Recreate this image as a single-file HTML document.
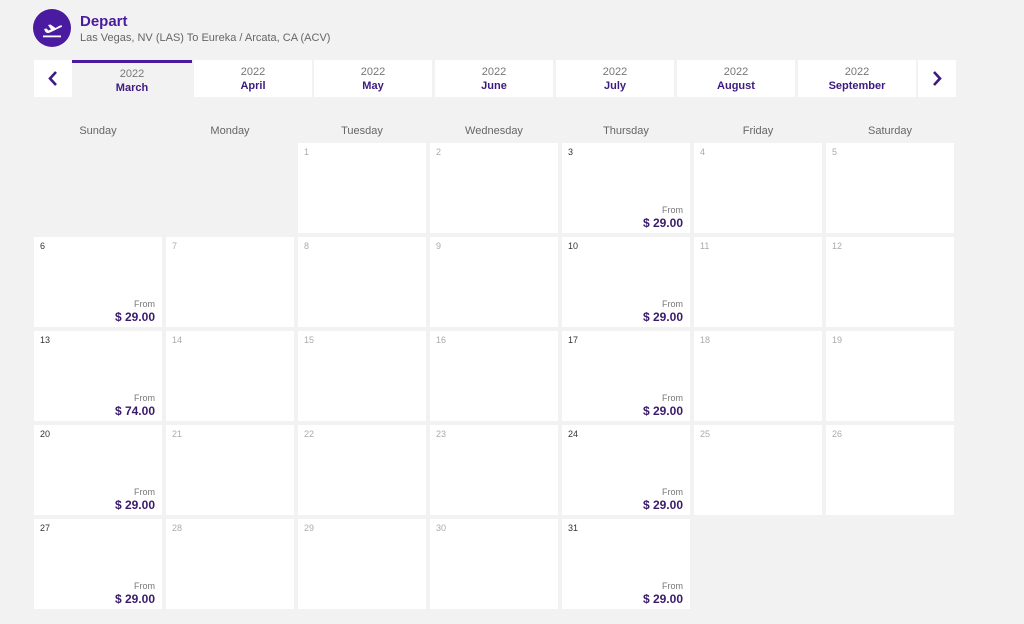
<!DOCTYPE html>
<html><head><meta charset="utf-8"><style>
*{margin:0;padding:0;box-sizing:border-box}
body{width:1024px;height:624px;background:#f2f2f2;font-family:"Liberation Sans","DejaVu Sans",sans-serif;position:relative;overflow:hidden}
.ic{position:absolute;left:33px;top:9px;width:38px;height:38px;border-radius:50%;background:#4a1aa0}
.t1{position:absolute;left:80px;top:13px;font-size:15px;font-weight:bold;color:#4a1aa0}
.t2{position:absolute;left:80px;top:32px;font-size:11px;color:#666}
.tab{position:absolute;top:60px;height:37px;background:#fff;text-align:center;font-size:11px;color:#777;padding-top:5px;line-height:14px}
.tab b{display:block;color:#3d1a80;font-size:11px}
.tab.sel{background:#f2f2f2;border-top:3px solid #4a1aa0;padding-top:4px}
.arr{position:absolute;top:60px;width:38px;height:37px;background:#fff}
.dh{position:absolute;top:125px;width:128px;text-align:center;font-size:11px;color:#666}
.g{position:absolute;left:34px;top:143px;display:grid;grid-template-columns:repeat(7,128px);grid-auto-rows:90px;column-gap:4px;row-gap:4px}
.c{background:#fff;position:relative}
.n{position:absolute;left:6px;top:4px;font-size:9px;color:#aaa}
.c.p .n{color:#333}
.f{position:absolute;right:7px;top:62px;font-size:9px;color:#777}
.pr{position:absolute;right:7px;top:73px;font-size:12px;font-weight:bold;color:#3a1a6a}
</style></head><body>
<div class="ic"><svg width="38" height="38" viewBox="0 0 38 38"><path d="M11 20 L13.5 19.5 L15.5 21.5 L18 20.5 L15 16 L17.5 15.5 L22.5 19 L26.5 16.8 C28.5 15.8 30 16.8 28.5 18 L17 23.5 C15 24.3 13.5 24 12.5 23 Z" fill="#fff"/><rect x="10" y="26.5" width="18" height="1.8" fill="#fff"/></svg></div>
<div class="t1">Depart</div>
<div class="t2">Las Vegas, NV (LAS) To Eureka / Arcata, CA (ACV)</div>
<div class="arr" style="left:34px"><svg width="38" height="37"><path d="M22 12 L16 18.5 L22 25" stroke="#3d1a80" stroke-width="2.6" fill="none"/></svg></div>
<div class="tab sel" style="left:72px;width:120px">2022<b>March</b></div>
<div class="tab" style="left:194px;width:118px">2022<b>April</b></div>
<div class="tab" style="left:314px;width:118px">2022<b>May</b></div>
<div class="tab" style="left:435px;width:118px">2022<b>June</b></div>
<div class="tab" style="left:556px;width:118px">2022<b>July</b></div>
<div class="tab" style="left:677px;width:118px">2022<b>August</b></div>
<div class="tab" style="left:798px;width:118px">2022<b>September</b></div>
<div class="arr" style="left:918px"><svg width="38" height="37"><path d="M16 12 L22 18.5 L16 25" stroke="#3d1a80" stroke-width="2.6" fill="none"/></svg></div>
<div class="dh" style="left:34px">Sunday</div>
<div class="dh" style="left:166px">Monday</div>
<div class="dh" style="left:298px">Tuesday</div>
<div class="dh" style="left:430px">Wednesday</div>
<div class="dh" style="left:562px">Thursday</div>
<div class="dh" style="left:694px">Friday</div>
<div class="dh" style="left:826px">Saturday</div>
<div class="g">
<div></div><div></div>
<div class="c"><span class="n">1</span></div>
<div class="c"><span class="n">2</span></div>
<div class="c p"><span class="n">3</span><span class="f">From</span><span class="pr">$ 29.00</span></div>
<div class="c"><span class="n">4</span></div>
<div class="c"><span class="n">5</span></div>
<div class="c p"><span class="n">6</span><span class="f">From</span><span class="pr">$ 29.00</span></div>
<div class="c"><span class="n">7</span></div>
<div class="c"><span class="n">8</span></div>
<div class="c"><span class="n">9</span></div>
<div class="c p"><span class="n">10</span><span class="f">From</span><span class="pr">$ 29.00</span></div>
<div class="c"><span class="n">11</span></div>
<div class="c"><span class="n">12</span></div>
<div class="c p"><span class="n">13</span><span class="f">From</span><span class="pr">$ 74.00</span></div>
<div class="c"><span class="n">14</span></div>
<div class="c"><span class="n">15</span></div>
<div class="c"><span class="n">16</span></div>
<div class="c p"><span class="n">17</span><span class="f">From</span><span class="pr">$ 29.00</span></div>
<div class="c"><span class="n">18</span></div>
<div class="c"><span class="n">19</span></div>
<div class="c p"><span class="n">20</span><span class="f">From</span><span class="pr">$ 29.00</span></div>
<div class="c"><span class="n">21</span></div>
<div class="c"><span class="n">22</span></div>
<div class="c"><span class="n">23</span></div>
<div class="c p"><span class="n">24</span><span class="f">From</span><span class="pr">$ 29.00</span></div>
<div class="c"><span class="n">25</span></div>
<div class="c"><span class="n">26</span></div>
<div class="c p"><span class="n">27</span><span class="f">From</span><span class="pr">$ 29.00</span></div>
<div class="c"><span class="n">28</span></div>
<div class="c"><span class="n">29</span></div>
<div class="c"><span class="n">30</span></div>
<div class="c p"><span class="n">31</span><span class="f">From</span><span class="pr">$ 29.00</span></div>
</div>
</body></html>
